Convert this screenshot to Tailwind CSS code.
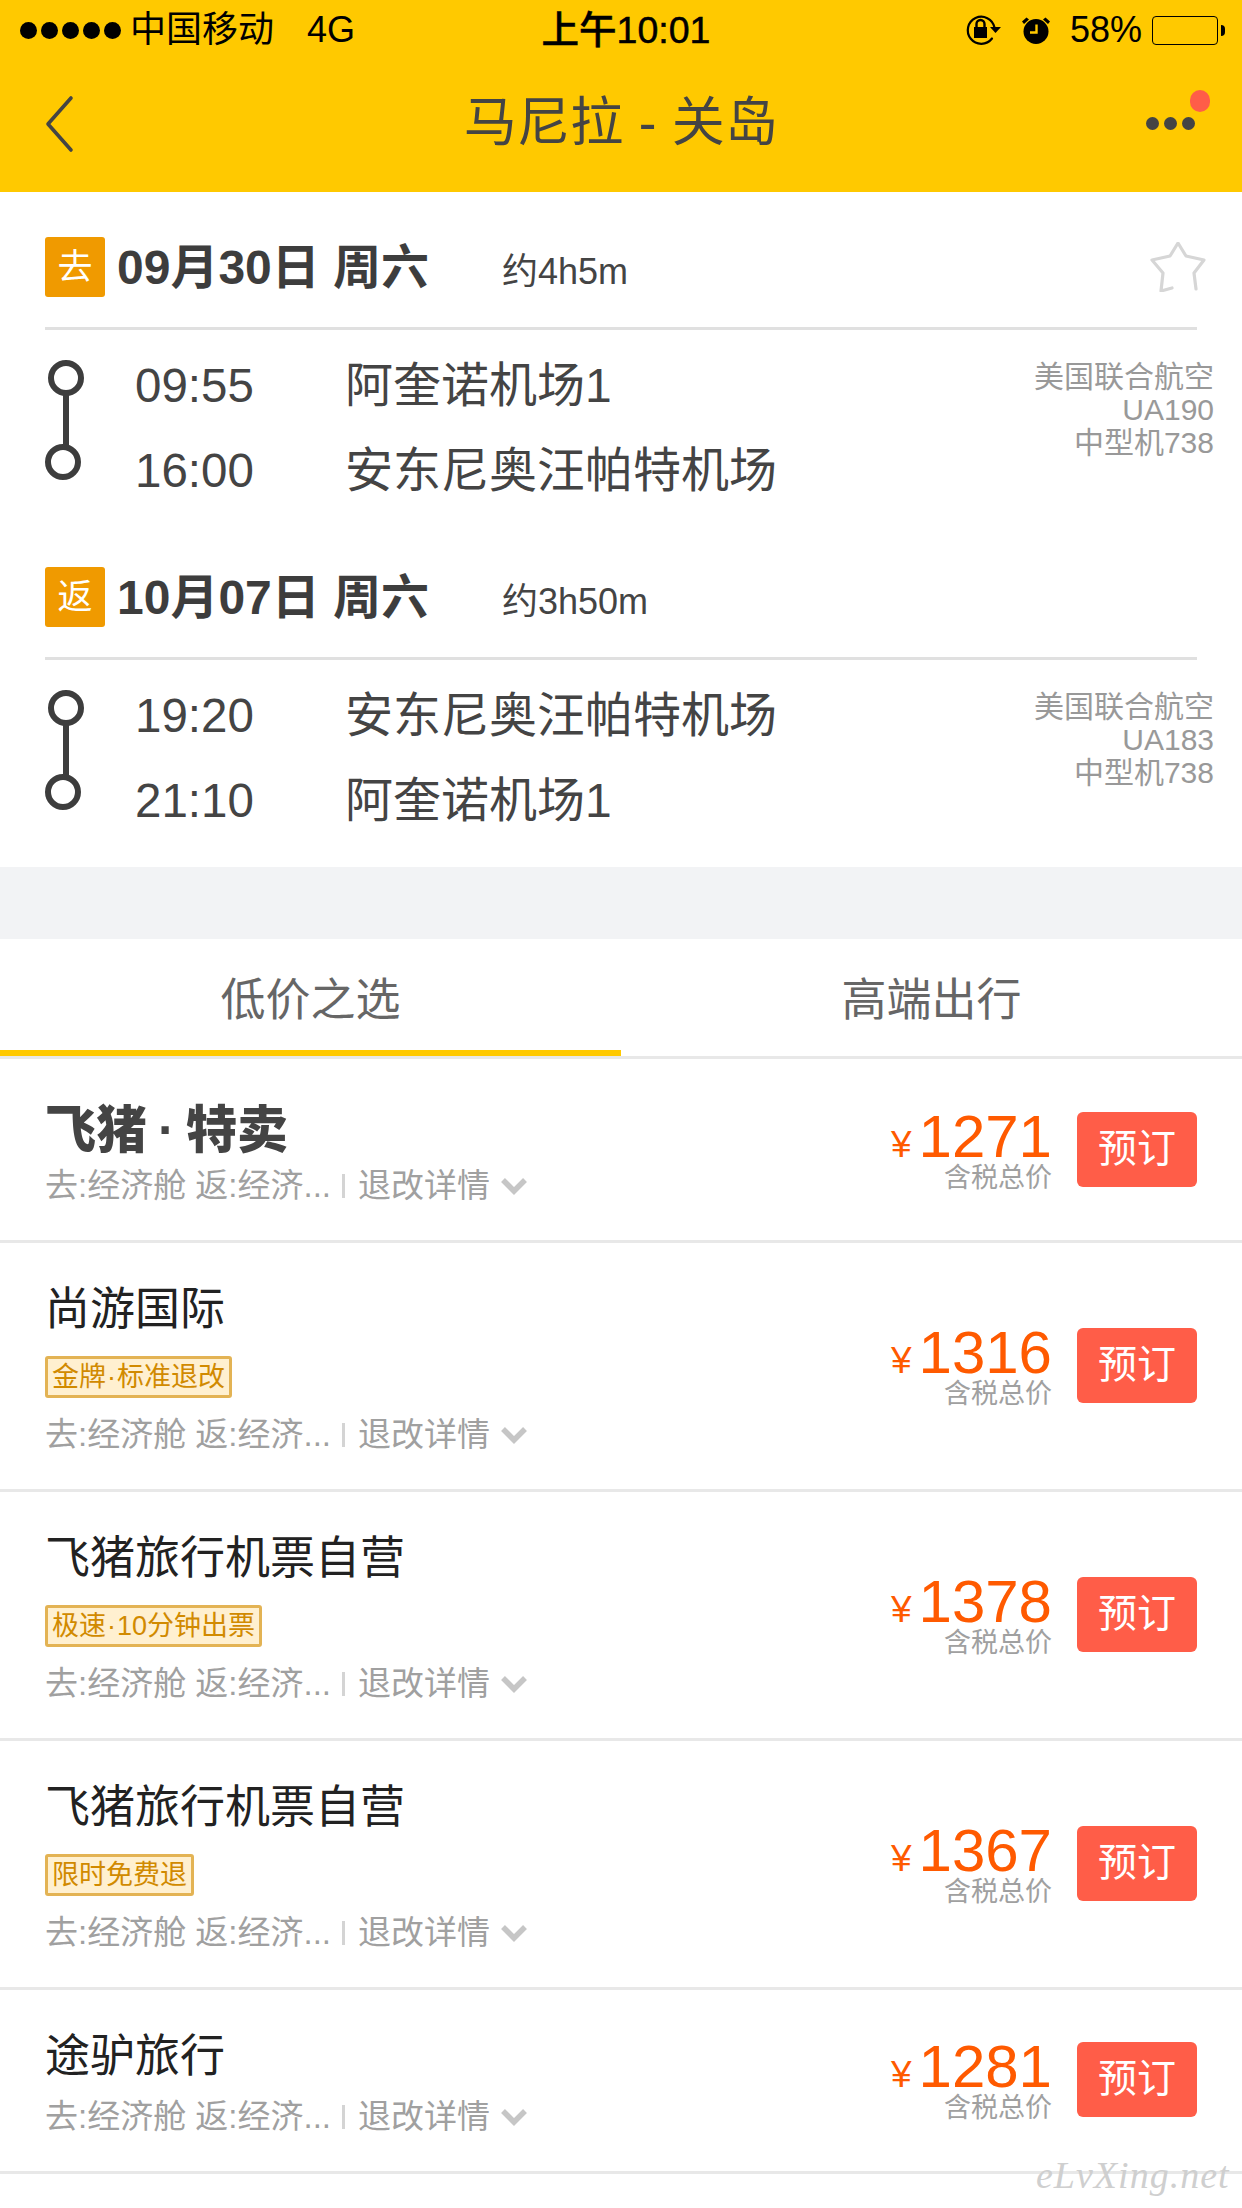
<!DOCTYPE html>
<html lang="zh"><head><meta charset="utf-8">
<script src="https://cdn.jsdelivr.net/npm/@tailwindcss/browser@4"></script>
</head>
<body class="bg-white">
<div class="relative w-[1242px] h-[2208px] overflow-hidden bg-white font-['Liberation_Sans','Noto_Sans_CJK_SC',sans-serif] text-[#444]">

<header class="h-[192px] bg-[#ffc900]">
  <div class="h-[60px] grid grid-cols-[1fr_auto_1fr] items-center text-black">
    <div class="flex items-center pl-[20px]">
      <div class="flex gap-[4px]">
        <span class="w-[17px] h-[17px] rounded-full bg-black"></span><span class="w-[17px] h-[17px] rounded-full bg-black"></span><span class="w-[17px] h-[17px] rounded-full bg-black"></span><span class="w-[17px] h-[17px] rounded-full bg-black"></span><span class="w-[17px] h-[17px] rounded-full bg-black"></span>
      </div>
      <span class="ml-[9px] text-[36px] leading-[40px]">中国移动</span>
      <span class="ml-[33px] text-[36px] leading-[40px]">4G</span>
    </div>
    <div class="text-[37.500px] leading-[40px] font-medium pl-[10px] [-webkit-text-stroke:0.5px_black]">上午10:01</div>
    <div class="flex items-center justify-end pr-[17px]">
      <svg class="w-[36px] h-[32px] mr-[20px]" viewBox="0 0 36 32" fill="none">
        <path d="M29.5 13.5A13.5 13.5 0 1 0 27 24.5" stroke="#000" stroke-width="2.2" stroke-linecap="round"/>
        <path d="M25 13h11l-5.5 6z" fill="#000"/>
        <rect x="9" y="13" width="13" height="11" fill="#000"/>
        <path d="M11.5 13.5V10a4 4 0 0 1 8 0v3.500" stroke="#000" stroke-width="2.400"/>
      </svg>
      <svg class="w-[30px] h-[28px] mr-[19px]" viewBox="0 0 30 28">
        <circle cx="15" cy="15.500" r="12.500" fill="#000"/>
        <path d="M1 5.500 5.500 1.500 8 3.500 3 8zM29 5.500 24.500 1.500 22 3.500 27 8z" fill="#000"/>
        <path d="M15.500 8.500v8H9" fill="none" stroke="#ffc900" stroke-width="2.400"/>
      </svg>
      <span class="text-[36px] leading-[40px]">58%</span>
      <div class="ml-[10px] w-[66px] h-[29px] rounded-[4px] border-[1.5px] border-black"></div>
      <div class="ml-[3px] w-[4px] h-[11px] rounded-r-full bg-black"></div>
    </div>
  </div>
  <nav class="h-[132px] grid grid-cols-[1fr_auto_1fr] items-center pb-[8px]">
    <div class="pl-[44px] pt-[4px]">
      <svg class="w-[30px] h-[58px]" viewBox="0 0 30 58" fill="none"><path d="M27 3 4 29l23 26" stroke="#444" stroke-width="3.600" stroke-linecap="round" stroke-linejoin="round"/></svg>
    </div>
    <h1 class="text-[53px] leading-[60px] pt-[2px] tracking-[0.3px] font-normal text-[#444]">马尼拉 - 关岛</h1>
    <div class="flex justify-end pr-[47px]">
      <div class="relative flex gap-[5px] pt-[2px]">
        <span class="w-[13px] h-[13px] rounded-full bg-[#444]"></span><span class="w-[13px] h-[13px] rounded-full bg-[#444]"></span><span class="w-[13px] h-[13px] rounded-full bg-[#444]"></span>
        <span class="absolute -top-[25px] -right-[15px] w-[20px] h-[22px] rounded-full bg-[#ff5d48]"></span>
      </div>
    </div>
  </nav>
</header>

<section class="h-[330px] pt-[45px] pl-[45px]">
  <div class="flex items-center h-[60px] pr-[36px]">
    <span class="w-[60px] h-[60px] rounded-[3px] bg-[#f09a00] text-white text-[35px] leading-[60px] text-center">去</span>
    <span class="ml-[12px] w-[385px] pt-[2px] text-[48px] leading-[60px] font-bold text-[#3d3d3d] whitespace-nowrap">09月30日 周六</span>
    <span class="text-[36px] leading-[60px] pt-[9px] text-[#444]">约4h5m</span>
    <svg class="ml-auto w-[56px] h-[50px]" viewBox="0 0 56 50" fill="none"><path d="M22 47 11 50 13 32 2 19 20 15 28 2 36 15 54 19 44 32 46 48" transform="translate(0 -1)" stroke="#d6d6d6" stroke-width="3.200" stroke-linejoin="round" stroke-linecap="round"/></svg>
  </div>
  <div class="mt-[30px] mr-[45px] h-[3px] bg-[#e0e0e0]"></div>
  <div class="relative flow-root mt-[30px] h-[170px]">
    <div class="absolute left-0 top-0 w-[36px] h-[120px]">
      <span class="absolute left-[3px] top-0 w-[36px] h-[36px] rounded-full border-[6px] border-[#3d3d3d]"></span>
      <span class="absolute left-[18px] top-[34px] w-[6px] h-[52px] bg-[#3d3d3d]"></span>
      <span class="absolute left-0 top-[84px] w-[36px] h-[36px] rounded-full border-[6px] border-[#3d3d3d]"></span>
    </div>
    <div class="pl-[90px] pr-[28px] flex -mt-[17px]">
      <div class="w-[210px] text-[47.500px] leading-[85px] text-[#444]"><div>09:55</div><div>16:00</div></div>
      <div class="flex-1 text-[48px] leading-[85px] text-[#444]"><div>阿奎诺机场1</div><div>安东尼奥汪帕特机场</div></div>
    </div>
    <div class="absolute right-[28px] top-0 text-right text-[30px] leading-[33px] text-[#999]"><div>美国联合航空</div><div>UA190</div><div>中型机738</div></div>
  </div>
</section>

<section class="h-[345px] pt-[45px] pl-[45px]">
  <div class="flex items-center h-[60px] pr-[36px]">
    <span class="w-[60px] h-[60px] rounded-[3px] bg-[#f09a00] text-white text-[35px] leading-[60px] text-center">返</span>
    <span class="ml-[12px] w-[385px] pt-[2px] text-[48px] leading-[60px] font-bold text-[#3d3d3d] whitespace-nowrap">10月07日 周六</span>
    <span class="text-[36px] leading-[60px] pt-[9px] text-[#444]">约3h50m</span>
  </div>
  <div class="mt-[30px] mr-[45px] h-[3px] bg-[#e0e0e0]"></div>
  <div class="relative flow-root mt-[30px] h-[170px]">
    <div class="absolute left-0 top-0 w-[36px] h-[120px]">
      <span class="absolute left-[3px] top-0 w-[36px] h-[36px] rounded-full border-[6px] border-[#3d3d3d]"></span>
      <span class="absolute left-[18px] top-[34px] w-[6px] h-[52px] bg-[#3d3d3d]"></span>
      <span class="absolute left-0 top-[84px] w-[36px] h-[36px] rounded-full border-[6px] border-[#3d3d3d]"></span>
    </div>
    <div class="pl-[90px] pr-[28px] flex -mt-[17px]">
      <div class="w-[210px] text-[47.500px] leading-[85px] text-[#444]"><div>19:20</div><div>21:10</div></div>
      <div class="flex-1 text-[48px] leading-[85px] text-[#444]"><div>安东尼奥汪帕特机场</div><div>阿奎诺机场1</div></div>
    </div>
    <div class="absolute right-[28px] top-0 text-right text-[30px] leading-[33px] text-[#999]"><div>美国联合航空</div><div>UA183</div><div>中型机738</div></div>
  </div>
</section>

<div class="h-[72px] bg-[#f2f3f5]"></div>

<div class="h-[120px] border-b-[3px] border-[#e8e8e8] flex">
  <div class="w-[621px] h-[117px] pt-[3px] border-b-[6px] border-[#ffc900] text-center text-[45px] leading-[117px] text-[#666]">低价之选</div>
  <div class="w-[621px] h-[117px] pt-[3px] text-center text-[45px] leading-[117px] text-[#666]">高端出行</div>
</div>

<main>
  <!-- row 1 -->
  <article class="h-[184px] border-b-[3px] border-[#e8e8e8] flex justify-between pl-[45px] pr-[45px]">
    <div class="pt-[46px]">
      <div class="flex h-[47px] pt-[2px] text-[51px] leading-[47px] font-black text-[#444] whitespace-nowrap"><span>飞猪</span><span class="w-[39px] text-center">·</span><span>特卖</span></div>
      <div class="mt-[17px] flex items-center h-[34px] text-[33px] leading-[34px] text-[#a0a0a0] whitespace-nowrap">
        <span class="w-[297px]">去:经济舱 返:经济...</span><span class="w-[3px] h-[24px] bg-[#d4d4d4]"></span><span class="ml-[13px] w-[142px]">退改详情</span>
        <svg class="w-[28px] h-[18px]" viewBox="0 0 28 18" fill="none"><path d="M3 3l11 11L25 3" stroke="#c6c6c6" stroke-width="5.500"/></svg>
      </div>
    </div>
    <div class="pt-[53px] flex items-start">
      <div class="flex flex-col items-end w-[161px] h-[75px]">
        <div class="flex items-start w-full h-[50px]"><span class="mt-[8px] text-[37px] leading-[50px] text-[#ff5a00] w-[28px]">¥</span><span class="text-[60px] leading-[50px] text-[#ff5a00]">1271</span></div>
        <div class="pt-[1px] text-[27px] leading-[30px] text-[#a0a0a0]">含税总价</div>
      </div>
      <button class="ml-[25px] w-[120px] h-[75px] rounded-[6px] bg-[#ff5d48] text-white text-[39px]">预订</button>
    </div>
  </article>

  <!-- row 2 -->
  <article class="h-[249px] border-b-[3px] border-[#e8e8e8] flex justify-between pl-[45px] pr-[45px]">
    <div class="pt-[45px]">
      <div class="h-[44px] text-[45px] leading-[44px] text-[#222]">尚游国际</div>
      <div class="mt-[24px] w-fit h-[42px] px-[4px] border-[3px] border-[#e3b354] rounded-[3px] bg-[#fff0d0] text-[#d18a00] text-[27px] leading-[36px] whitespace-nowrap">金牌<span class="mx-[1px]">·</span>标准退改</div>
      <div class="mt-[20px] flex items-center h-[34px] text-[33px] leading-[34px] text-[#a0a0a0] whitespace-nowrap">
        <span class="w-[297px]">去:经济舱 返:经济...</span><span class="w-[3px] h-[24px] bg-[#d4d4d4]"></span><span class="ml-[13px] w-[142px]">退改详情</span>
        <svg class="w-[28px] h-[18px]" viewBox="0 0 28 18" fill="none"><path d="M3 3l11 11L25 3" stroke="#c6c6c6" stroke-width="5.500"/></svg>
      </div>
    </div>
    <div class="pt-[85px] flex items-start">
      <div class="flex flex-col items-end w-[161px] h-[75px]">
        <div class="flex items-start w-full h-[50px]"><span class="mt-[8px] text-[37px] leading-[50px] text-[#ff5a00] w-[28px]">¥</span><span class="text-[60px] leading-[50px] text-[#ff5a00]">1316</span></div>
        <div class="pt-[1px] text-[27px] leading-[30px] text-[#a0a0a0]">含税总价</div>
      </div>
      <button class="ml-[25px] w-[120px] h-[75px] rounded-[6px] bg-[#ff5d48] text-white text-[39px]">预订</button>
    </div>
  </article>

  <!-- row 3 -->
  <article class="h-[249px] border-b-[3px] border-[#e8e8e8] flex justify-between pl-[45px] pr-[45px]">
    <div class="pt-[45px]">
      <div class="h-[44px] text-[45px] leading-[44px] text-[#222]">飞猪旅行机票自营</div>
      <div class="mt-[24px] w-fit h-[42px] px-[4px] border-[3px] border-[#e3b354] rounded-[3px] bg-[#fff0d0] text-[#d18a00] text-[27px] leading-[36px] whitespace-nowrap">极速<span class="mx-[1px]">·</span>10分钟出票</div>
      <div class="mt-[20px] flex items-center h-[34px] text-[33px] leading-[34px] text-[#a0a0a0] whitespace-nowrap">
        <span class="w-[297px]">去:经济舱 返:经济...</span><span class="w-[3px] h-[24px] bg-[#d4d4d4]"></span><span class="ml-[13px] w-[142px]">退改详情</span>
        <svg class="w-[28px] h-[18px]" viewBox="0 0 28 18" fill="none"><path d="M3 3l11 11L25 3" stroke="#c6c6c6" stroke-width="5.500"/></svg>
      </div>
    </div>
    <div class="pt-[85px] flex items-start">
      <div class="flex flex-col items-end w-[161px] h-[75px]">
        <div class="flex items-start w-full h-[50px]"><span class="mt-[8px] text-[37px] leading-[50px] text-[#ff5a00] w-[28px]">¥</span><span class="text-[60px] leading-[50px] text-[#ff5a00]">1378</span></div>
        <div class="pt-[1px] text-[27px] leading-[30px] text-[#a0a0a0]">含税总价</div>
      </div>
      <button class="ml-[25px] w-[120px] h-[75px] rounded-[6px] bg-[#ff5d48] text-white text-[39px]">预订</button>
    </div>
  </article>

  <!-- row 4 -->
  <article class="h-[249px] border-b-[3px] border-[#e8e8e8] flex justify-between pl-[45px] pr-[45px]">
    <div class="pt-[45px]">
      <div class="h-[44px] text-[45px] leading-[44px] text-[#222]">飞猪旅行机票自营</div>
      <div class="mt-[24px] w-fit h-[42px] px-[4px] border-[3px] border-[#e3b354] rounded-[3px] bg-[#fff0d0] text-[#d18a00] text-[27px] leading-[36px] whitespace-nowrap">限时免费退</div>
      <div class="mt-[20px] flex items-center h-[34px] text-[33px] leading-[34px] text-[#a0a0a0] whitespace-nowrap">
        <span class="w-[297px]">去:经济舱 返:经济...</span><span class="w-[3px] h-[24px] bg-[#d4d4d4]"></span><span class="ml-[13px] w-[142px]">退改详情</span>
        <svg class="w-[28px] h-[18px]" viewBox="0 0 28 18" fill="none"><path d="M3 3l11 11L25 3" stroke="#c6c6c6" stroke-width="5.500"/></svg>
      </div>
    </div>
    <div class="pt-[85px] flex items-start">
      <div class="flex flex-col items-end w-[161px] h-[75px]">
        <div class="flex items-start w-full h-[50px]"><span class="mt-[8px] text-[37px] leading-[50px] text-[#ff5a00] w-[28px]">¥</span><span class="text-[60px] leading-[50px] text-[#ff5a00]">1367</span></div>
        <div class="pt-[1px] text-[27px] leading-[30px] text-[#a0a0a0]">含税总价</div>
      </div>
      <button class="ml-[25px] w-[120px] h-[75px] rounded-[6px] bg-[#ff5d48] text-white text-[39px]">预订</button>
    </div>
  </article>

  <!-- row 5 -->
  <article class="h-[184px] border-b-[3px] border-[#e8e8e8] flex justify-between pl-[45px] pr-[45px]">
    <div class="pt-[45px]">
      <div class="h-[44px] text-[45px] leading-[44px] text-[#222]">途驴旅行</div>
      <div class="mt-[21px] flex items-center h-[34px] text-[33px] leading-[34px] text-[#a0a0a0] whitespace-nowrap">
        <span class="w-[297px]">去:经济舱 返:经济...</span><span class="w-[3px] h-[24px] bg-[#d4d4d4]"></span><span class="ml-[13px] w-[142px]">退改详情</span>
        <svg class="w-[28px] h-[18px]" viewBox="0 0 28 18" fill="none"><path d="M3 3l11 11L25 3" stroke="#c6c6c6" stroke-width="5.500"/></svg>
      </div>
    </div>
    <div class="pt-[52px] flex items-start">
      <div class="flex flex-col items-end w-[161px] h-[75px]">
        <div class="flex items-start w-full h-[50px]"><span class="mt-[8px] text-[37px] leading-[50px] text-[#ff5a00] w-[28px]">¥</span><span class="text-[60px] leading-[50px] text-[#ff5a00]">1281</span></div>
        <div class="pt-[1px] text-[27px] leading-[30px] text-[#a0a0a0]">含税总价</div>
      </div>
      <button class="ml-[25px] w-[120px] h-[75px] rounded-[6px] bg-[#ff5d48] text-white text-[39px]">预订</button>
    </div>
  </article>
</main>

<div class="absolute left-[1036px] top-[2152px] font-['Liberation_Serif',serif] italic text-[38px] leading-[46px] tracking-[1px] text-[#cfcfcf] whitespace-nowrap">eLvXing.net</div>
</div>
</body></html>
